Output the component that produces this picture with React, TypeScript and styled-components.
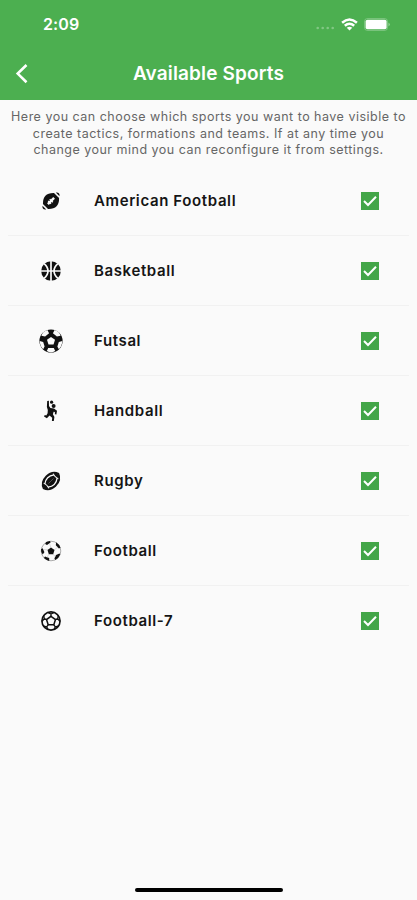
import React from 'react';
import styled, { createGlobalStyle } from 'styled-components';

const GlobalStyle = createGlobalStyle`
  * { box-sizing: border-box; }
  body { margin: 0; background: #fafafa; font-family: Inter, 'Liberation Sans', sans-serif; }
`;

const Screen = styled.main`
  display: flex;
  flex-direction: column;
  width: 417px;
  height: 900px;
  overflow: hidden;
  background: #fafafa;
`;

const Header = styled.header`
  height: 100px;
  flex: none;
  background: #4caf50;
  color: #fff;
`;

const StatusBar = styled.div`
  display: flex;
  align-items: center;
  justify-content: space-between;
  height: 47px;
  padding: 1px 27px 0 43px;
`;

const Clock = styled.span`
  font-size: 16px;
  font-weight: 600;
  letter-spacing: 0.1px;
`;

const StatusIcons = styled.div`
  display: flex;
  align-items: center;
  gap: 6px;
  svg { display: block; }
`;

const NavBar = styled.div`
  display: grid;
  grid-template-columns: 44px 1fr 44px;
  align-items: center;
  height: 53px;
`;

const BackButton = styled.button`
  display: flex;
  align-items: center;
  height: 44px;
  padding: 0 0 0 14px;
  border: 0;
  background: none;
  color: inherit;
`;

const Title = styled.h1`
  margin: 0;
  font-size: 19px;
  font-weight: 600;
  letter-spacing: 0.15px;
  text-align: center;
  white-space: nowrap;
`;

const Intro = styled.p`
  flex: none;
  height: 66px;
  margin: 0;
  padding-top: 9px;
  color: #666;
  font-size: 12.5px;
  line-height: 16.6px;
  letter-spacing: 0.49px;
  text-align: center;
  white-space: nowrap;
`;

const List = styled.ul`
  flex: 1;
  margin: 0;
  padding: 0 8px;
  list-style: none;
`;

const Row = styled.li`
  display: grid;
  grid-template-columns: 54px 1fr 18px;
  align-items: center;
  height: 70px;
  padding: 0 30px 0 32px;
  border-bottom: 1px solid #f1f1f1;
  &:last-child { border-bottom-color: transparent; }
  svg { display: block; }
`;

const IconSlot = styled.span`
  display: flex;
  margin-left: -1px;
`;

const SportName = styled.span`
  color: #151515;
  font-size: 15px;
  font-weight: 600;
  letter-spacing: 0.62px;
`;

const Checkbox = styled.span`
  display: block;
  width: 18px;
  height: 18px;
  background: #43a648;
`;

const HomeBar = styled.div`
  flex: none;
  width: 148px;
  height: 4px;
  margin: 0 0 8px 135px;
  border-radius: 2px;
  background: #000;
`;

const ink = '#111';

const Glyph = ({ children }: { children: React.ReactNode }) => (
  <svg width="24" height="24" viewBox="0 0 24 24" fill="none" stroke={ink}>{children}</svg>
);

const AmericanFootballIcon = () => (
  <Glyph>
    <g transform="rotate(-45 12 12)" stroke="none">
      <path d="M4.2 8.4Q12 .2 19.8 8.4V15.6Q12 23.8 4.2 15.6Z" fill={ink} />
      <path d="M2.6 9.4Q-.8 12 2.6 14.6ZM21.4 9.4Q24.8 12 21.4 14.6Z" fill={ink} />
      <path d="M7.6 12H16.4" stroke="#fafafa" strokeWidth="2.4" />
      <path d="M10 10V14M12.4 9.8V14.2" stroke="#fafafa" strokeWidth="1.3" />
    </g>
  </Glyph>
);

const BasketballIcon = () => (
  <Glyph>
    <circle cx="12" cy="12" r="9.8" fill={ink} stroke="none" />
    <path d="M12 2V22M2 12H22M5 4.6Q9 8 9 12T5 19.4M19 4.6Q15 8 15 12T19 19.4" stroke="#fafafa" strokeWidth="1.7" />
  </Glyph>
);

const FutsalIcon = () => (
  <Glyph>
    <circle cx="12" cy="12" r="11.6" fill={ink} stroke="none" />
    <g fill="#fafafa" stroke="none">
      <path d="M12 7.9L16 10.8L14.5 15.4H9.5L8 10.8Z" />
      <path d="M4.1 3.4Q6 1.7 8.4 1L10.1 4.2L6.1 7.4L2.4 6.7Q3 4.9 4.1 3.4Z" />
      <path d="M19.9 3.4Q18 1.7 15.6 1L13.9 4.2L17.9 7.4L21.6 6.7Q21 4.9 19.9 3.4Z" />
      <path d="M.7 12L4.2 13L5.6 17.4L4.2 20.2Q.8 17 .7 12Z" />
      <path d="M23.3 12L19.8 13L18.4 17.4L19.8 20.2Q23.2 17 23.3 12Z" />
      <path d="M9.2 19H14.8L16.2 22Q12 24.4 7.8 22Z" />
    </g>
  </Glyph>
);

const HandballIcon = () => (
  <Glyph>
    <g fill={ink} stroke="none">
      <circle cx="12.6" cy="3.2" r="1.6" />
      <circle cx="14.6" cy="7" r="2" />
      <path d="M8.2 1.9L9.9 1.7L10 7L11.4 9L15 9.4L18 11.8L17.4 15.6L15.9 15.2V13L14.6 12.8L13.9 15.2L15.4 18L14.8 22H12.9L13.2 18.8L10.5 16.4L7.9 19.3L5 17.5L5.8 16L7.3 16.6L8.6 14.2L8.8 11L7.9 8Z" />
    </g>
  </Glyph>
);

const RugbyIcon = () => (
  <Glyph>
    <g transform="rotate(-45 12 12)">
      <path d="M.6 12Q3.2 4.6 12 4.6T23.4 12Q20.8 19.4 12 19.4T.6 12Z" fill={ink} stroke="none" />
      <path d="M5.5 9.8Q12 4.8 18.5 9.8M5.5 14.2Q12 19.2 18.5 14.2" stroke="#fafafa" strokeWidth="1.3" />
      <path d="M5.3 8.3Q6.8 12 5.3 15.7M18.7 8.3Q17.2 12 18.7 15.7" stroke="#fafafa" strokeWidth="1" />
      <path d="M8.5 12H15.5" stroke="#777" strokeWidth=".6" />
    </g>
  </Glyph>
);

const FootballIcon = () => (
  <Glyph>
    <circle cx="12" cy="12" r="9.8" stroke="#777" strokeWidth=".6" />
    <g fill={ink} stroke="none">
      <path d="M12 8.4L15.5 11L14.2 15.2H9.8L8.5 11Z" />
      <path d="M7.2 3.1L11 2.1L11.6 3.6L8 5.9L6.1 5.1Z" />
      <path d="M17.1 3.2Q20.4 5.2 21.5 8.8L19.9 9.4L16.8 6.3Z" />
      <path d="M2 10.2L3.7 9.2L5.4 13.2L3.7 15.5Q1.7 13 2 10.2Z" />
      <path d="M6 17.6L10.2 19.1V21.9Q7 21.2 4.9 19Z" />
      <path d="M17 16L20.5 14.4L21.2 15.4Q19.5 19.4 16.3 20.9L15.4 19.4Z" />
    </g>
    <path d="M12 9L10.5 4.5M15 11L19 8M14 15L16.5 18M10 15L8 18.5M9 11L4.5 10.5" stroke="#bbb" strokeWidth=".5" />
  </Glyph>
);

const FootballSevenIcon = () => (
  <Glyph>
    <circle cx="12" cy="12" r="9.1" strokeWidth="1.6" />
    <path d="M12 7.3L16.5 10.6L14.8 15.8H9.2L7.5 10.6Z" strokeWidth="1.5" />
    <path d="M12 7.3V5L8.5 3.5M12 5L15.5 3.5M16.3 10.6L18.7 9.7L19.4 6M18.7 9.7L21 12.5M14.7 15.7L16.3 17.8L15 20.5M16.3 17.8L20 17M9.3 15.7L7.7 17.8L9 20.5M7.7 17.8L4 17M7.7 10.6L5.3 9.7L4.6 6M5.3 9.7L3 12.5" strokeWidth="1.3" />
  </Glyph>
);

const sports = [
  { name: 'American Football', Icon: AmericanFootballIcon },
  { name: 'Basketball', Icon: BasketballIcon },
  { name: 'Futsal', Icon: FutsalIcon },
  { name: 'Handball', Icon: HandballIcon },
  { name: 'Rugby', Icon: RugbyIcon },
  { name: 'Football', Icon: FootballIcon },
  { name: 'Football-7', Icon: FootballSevenIcon },
];

export default function App() {
  return (
    <>
      <GlobalStyle />
      <Screen>
        <Header>
          <StatusBar>
            <Clock>2:09</Clock>
            <StatusIcons>
              <svg width="19" height="14" viewBox="0 0 19 14" fill="#fff" fillOpacity=".3">
                <circle cx="1.7" cy="11" r="1.3" /><circle cx="6.7" cy="11" r="1.3" />
                <circle cx="11.7" cy="11" r="1.3" /><circle cx="16.7" cy="11" r="1.3" />
              </svg>
              <svg width="17" height="13" viewBox="0 0 17 13" fill="none" stroke="#fff" strokeWidth="2.5">
                <path d="M1.1 4.7Q8.5 -1.8 15.9 4.7M3.8 7.8Q8.5 3.8 13.2 7.8" />
                <path d="M8.5 12.6L5.7 9.8Q8.5 7.7 11.3 9.8Z" fill="#fff" stroke="none" />
              </svg>
              <svg width="26" height="13" viewBox="0 0 26 13">
                <rect x=".5" y=".5" width="23" height="12" rx="3" fill="none" stroke="#fff" strokeOpacity=".25" />
                <rect x="1.6" y="1.7" width="21" height="9.6" rx="1.8" fill="#fff" />
                <path d="M24.5 4.5Q27 6.5 24.5 8.5Z" fill="#fff" fillOpacity=".45" />
              </svg>
            </StatusIcons>
          </StatusBar>
          <NavBar>
            <BackButton aria-label="Back">
              <svg width="16" height="20" viewBox="0 0 16 20" fill="none" stroke="#fff" strokeWidth="2.6">
                <path d="M12.5 1L3.7 9.6L12.5 18.2" />
              </svg>
            </BackButton>
            <Title>Available Sports</Title>
          </NavBar>
        </Header>
        <Intro>
          Here you can choose which sports you want to have visible to<br />
          create tactics, formations and teams. If at any time you<br />
          change your mind you can reconfigure it from settings.
        </Intro>
        <List>
          {sports.map(({ name, Icon }) => (
            <Row key={name}>
              <IconSlot><Icon /></IconSlot>
              <SportName>{name}</SportName>
              <Checkbox role="checkbox" aria-checked="true" aria-label={name}>
                <svg width="18" height="18" viewBox="0 0 18 18" fill="none" stroke="#fff" strokeWidth="2">
                  <path d="M3 9L7 13L15 4.8" />
                </svg>
              </Checkbox>
            </Row>
          ))}
        </List>
        <HomeBar />
      </Screen>
    </>
  );
}
